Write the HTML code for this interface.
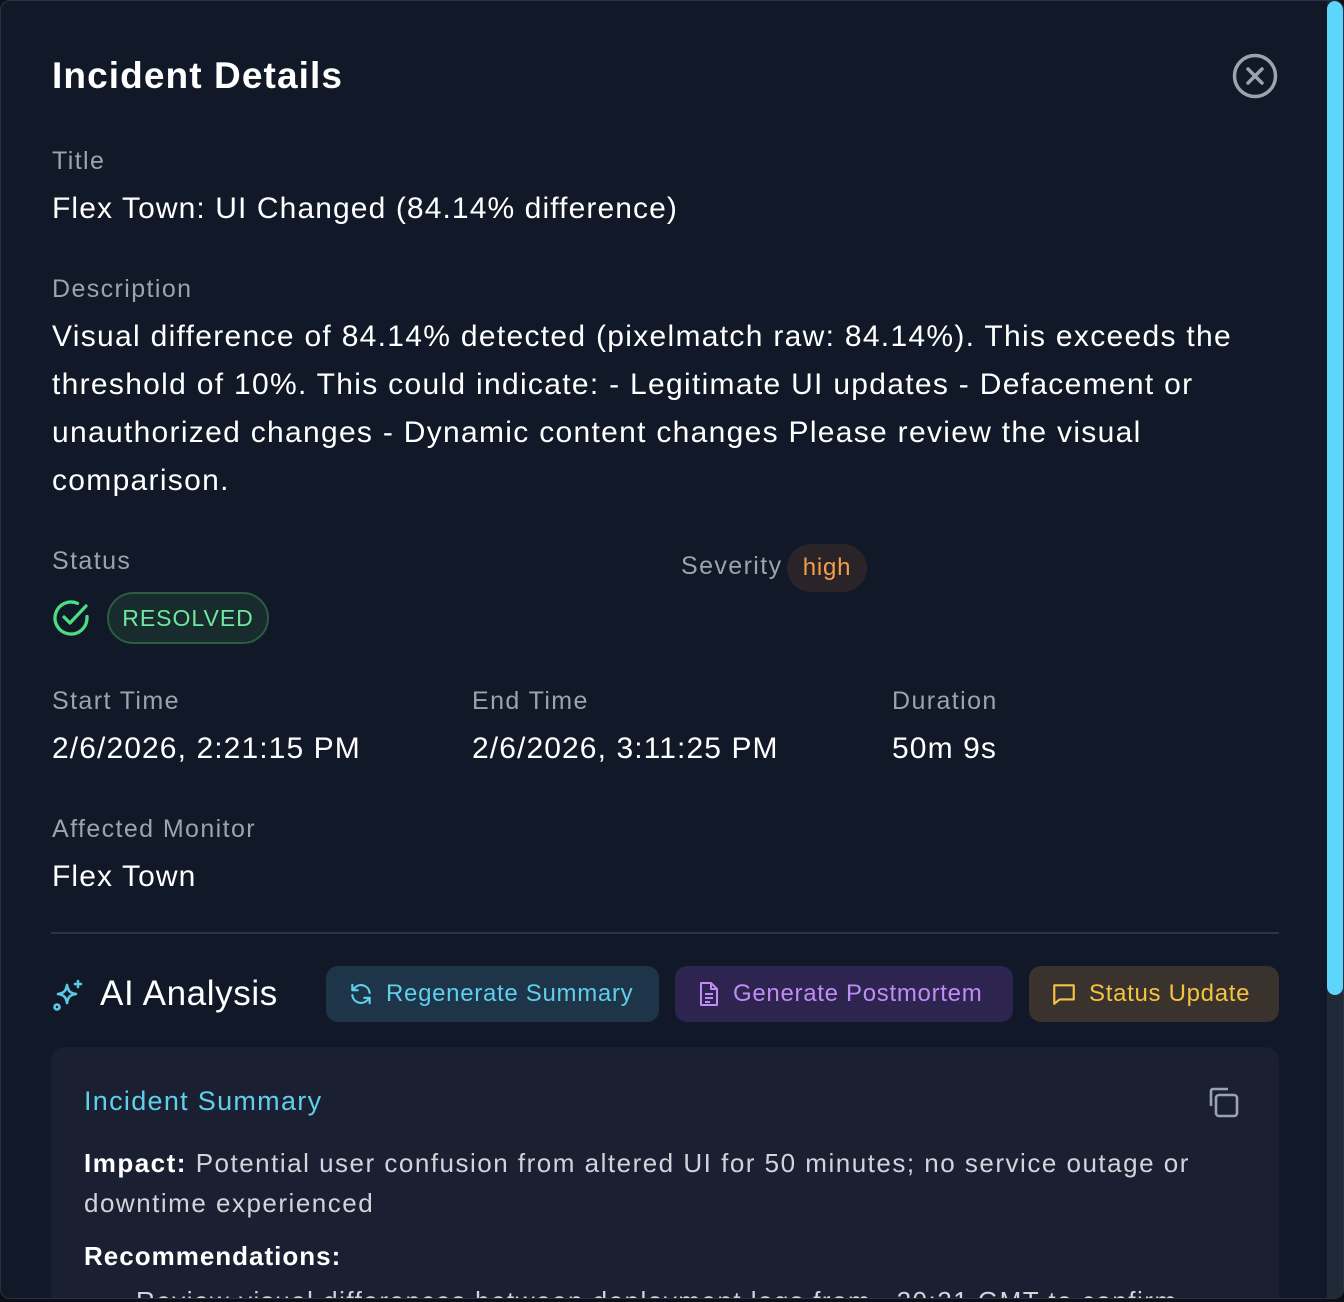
<!DOCTYPE html>
<html><head><meta charset="utf-8"><style>
*{margin:0;padding:0;box-sizing:border-box}
html,body{width:1344px;height:1302px;overflow:hidden;background:#0b0f17;font-family:"Liberation Sans",sans-serif}
.panel{position:absolute;left:0;top:0;width:1344px;height:1299px;background:#111827;border:1px solid #2a3140;border-radius:10px;overflow:hidden}
.a{position:absolute;white-space:nowrap}
.lbl{color:#9ca3af;font-size:25px;letter-spacing:1.4px}
.val{color:#fff;font-size:30px;letter-spacing:1.1px}
.btn{position:absolute;top:965px;height:56px;border-radius:12px;font-size:24px;display:flex;align-items:center;padding-left:22px;gap:12px;letter-spacing:0.7px}
</style></head><body>
<div class="panel">
<div class="a" style="left:51px;top:54px;color:#fff;font-size:37px;font-weight:bold;letter-spacing:1.1px">Incident Details</div>
<svg class="a" style="left:1230px;top:51px" width="48" height="48" viewBox="0 0 48 48"><circle cx="24" cy="24" r="20.5" fill="none" stroke="#9ca3af" stroke-width="3.5"/><path d="M17 17L31 31M31 17L17 31" stroke="#9ca3af" stroke-width="3.5" stroke-linecap="round"/></svg>
<div class="a lbl" style="left:51px;top:146px">Title</div>
<div class="a val" style="left:51px;top:191px">Flex Town: UI Changed (84.14% difference)</div>
<div class="a lbl" style="left:51px;top:274px">Description</div>
<div class="a val" style="left:51px;top:312px;white-space:normal;width:1200px;line-height:48px;letter-spacing:1.3px">Visual difference of 84.14% detected (pixelmatch raw: 84.14%). This exceeds the threshold of 10%. This could indicate: - Legitimate UI updates - Defacement or unauthorized changes - Dynamic content changes Please review the visual comparison.</div>
<div class="a lbl" style="left:51px;top:546px">Status</div>
<svg class="a" style="left:50px;top:597px" width="40" height="40" viewBox="0 0 40 40"><path d="M36 18.5V20a16 16 0 1 1-9.5-14.6" fill="none" stroke="#4ade80" stroke-width="3.3" stroke-linecap="round"/><path d="M13 19l6 6L35 8" fill="none" stroke="#4ade80" stroke-width="3.3" stroke-linecap="round" stroke-linejoin="round"/></svg>
<div class="a" style="left:106px;top:591px;width:162px;height:52px;border:2px solid #2f5a44;background:#182b2d;border-radius:26px;color:#6ee7a0;font-size:23px;display:flex;align-items:center;justify-content:center;letter-spacing:1px">RESOLVED</div>
<div class="a lbl" style="left:680px;top:551px">Severity</div>
<div class="a" style="left:786px;top:543px;width:80px;height:48px;background:#2a2328;border-radius:24px;color:#f59e4a;font-size:24px;display:flex;align-items:center;justify-content:center;letter-spacing:0.8px">high</div>
<div class="a lbl" style="left:51px;top:686px">Start Time</div>
<div class="a val" style="left:51px;top:731px">2/6/2026, 2:21:15 PM</div>
<div class="a lbl" style="left:471px;top:686px">End Time</div>
<div class="a val" style="left:471px;top:731px">2/6/2026, 3:11:25 PM</div>
<div class="a lbl" style="left:891px;top:686px">Duration</div>
<div class="a val" style="left:891px;top:731px">50m 9s</div>
<div class="a lbl" style="left:51px;top:814px">Affected Monitor</div>
<div class="a val" style="left:51px;top:859px">Flex Town</div>
<div class="a" style="left:50px;top:931px;width:1228px;height:2px;background:#2b3445"></div>
<svg class="a" style="left:50px;top:977px" width="34" height="34" viewBox="0 0 34 34" fill="none" stroke="#5bc8e8" stroke-width="2.6" stroke-linecap="round" stroke-linejoin="round"><path d="M16 7c1 6 3 8 9 9-6 1-8 3-9 9-1-6-3-8-9-9 6-1 8-3 9-9z"/><path d="M27 3v6M24 6h6"/><circle cx="6" cy="29" r="2.5"/></svg>
<div class="a" style="left:99px;top:973px;color:#fff;font-size:35px;letter-spacing:0.6px">AI Analysis</div>
<div class="btn" style="left:325px;width:333px;background:#1e3449;color:#5fcfea"><svg width="26" height="26" viewBox="0 0 24 24" fill="none" stroke="#5fcfea" stroke-width="2" stroke-linecap="round" stroke-linejoin="round"><path d="M20 11a8 8 0 0 0-14-4.5L4 8.5M4 3.5v5h5M4 13a8 8 0 0 0 14 4.5l2-2M20 20.5v-5h-5"/></svg>Regenerate Summary</div>
<div class="btn" style="left:674px;width:338px;background:#2d2450;color:#c08cf5"><svg width="24" height="26" viewBox="0 0 24 26" fill="none" stroke="#c08cf5" stroke-width="2" stroke-linejoin="round"><path d="M4 2h10l6 6v16H4z M14 2v6h6 M8 13h8M8 17h8M8 21h5"/></svg>Generate Postmortem</div>
<div class="btn" style="left:1028px;width:250px;background:#3a322d;color:#f5c242"><svg width="26" height="26" viewBox="0 0 24 24" fill="none" stroke="#f5c242" stroke-width="2" stroke-linejoin="round"><path d="M3 4h18v13H8l-5 4z"/></svg>Status Update</div>
<div class="a" style="left:50px;top:1046px;width:1228px;height:300px;background:#1a2032;border-radius:14px"></div>
<div class="a" style="left:83px;top:1085px;color:#5fcfea;font-size:27px;letter-spacing:1.3px">Incident Summary</div>
<svg class="a" style="left:1205px;top:1084px" width="34" height="34" viewBox="0 0 34 34" fill="none" stroke="#9ca3af" stroke-width="2.6" stroke-linejoin="round"><rect x="10" y="10" width="21" height="21" rx="3"/><path d="M5 21V6a2 2 0 0 1 2-2h15"/></svg>
<div class="a" style="left:83px;top:1142px;color:#d1d5db;font-size:26px;line-height:40px;white-space:normal;width:1150px;letter-spacing:1.5px"><b style="color:#fff">Impact:</b> Potential user confusion from altered UI for 50 minutes; no service outage or downtime experienced</div>
<div class="a" style="left:83px;top:1240px;color:#fff;font-size:26px;font-weight:bold;letter-spacing:1px">Recommendations:</div>
<div class="a" style="left:135px;top:1285px;color:#d1d5db;font-size:26px;letter-spacing:1.5px">Review visual differences between deployment logs from ~20:21 GMT to confirm</div>
<div class="a" style="left:1326px;top:0;width:18px;height:1299px;background:#1f2937"></div>
<div class="a" style="left:1326px;top:0;width:16px;height:994px;background:#5ed6fb;border-radius:8px"></div>
</div>
</body></html>
